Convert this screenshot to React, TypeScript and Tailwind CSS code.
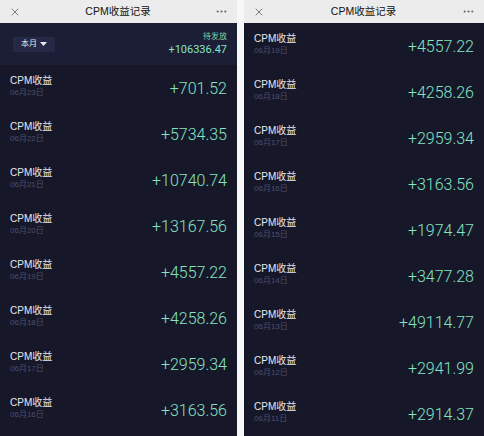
import { X, MoreHorizontal } from 'lucide-react'

type Row = { date: string; amount: string }

const left: Row[] = [
  { date: '06月23日', amount: '+701.52' },
  { date: '06月22日', amount: '+5734.35' },
  { date: '06月21日', amount: '+10740.74' },
  { date: '06月20日', amount: '+13167.56' },
  { date: '06月19日', amount: '+4557.22' },
  { date: '06月18日', amount: '+4258.26' },
  { date: '06月17日', amount: '+2959.34' },
  { date: '06月16日', amount: '+3163.56' },
]

const right: Row[] = [
  { date: '06月19日', amount: '+4557.22' },
  { date: '06月18日', amount: '+4258.26' },
  { date: '06月17日', amount: '+2959.34' },
  { date: '06月16日', amount: '+3163.56' },
  { date: '06月15日', amount: '+1974.47' },
  { date: '06月14日', amount: '+3477.28' },
  { date: '06月13日', amount: '+49114.77' },
  { date: '06月12日', amount: '+2941.99' },
  { date: '06月11日', amount: '+2914.37' },
]

const font = { fontFamily: '"Liberation Sans", "Noto Sans CJK SC", sans-serif' }

function Header() {
  return (
    <div className="h-[23px] shrink-0 bg-[#ececec] flex items-center justify-between px-[9px]">
      <X size={12} strokeWidth={1.5} className="text-[#555]" />
      <span className="text-[10.5px] text-[#111]">CPM收益记录</span>
      <MoreHorizontal size={13} strokeWidth={2} className="text-[#666]" />
    </div>
  )
}

function Item({ row }: { row: Row }) {
  return (
    <div className="h-[46px] shrink-0 flex items-center justify-between pl-[10px] pr-[10px]">
      <div className="flex flex-col -mt-[4px]">
        <span className="text-[10px] leading-[13px] text-[#e8e8ee]">CPM收益</span>
        <span className="text-[8px] leading-[11px] text-[#4b4e6e]">{row.date}</span>
      </div>
      <span className="font-['Roboto',sans-serif] font-light text-[16px] text-[#84e4c4] mt-[1px]">{row.amount}</span>
    </div>
  )
}

export default function App() {
  return (
    <div style={font} className="w-[484px] h-[436px] bg-[#f7f7f7] flex gap-[7px] overflow-hidden">
      <div className="w-[237px] h-full bg-[#161829] flex flex-col overflow-hidden">
        <Header />
        <div className="h-[42px] shrink-0 bg-[#1c1e35] flex items-center justify-between pl-[13px] pr-[10px]">
          <div className="h-[15px] px-[8px] bg-[#252945] flex items-center gap-[3px] text-[8px] text-[#e8e8ee]">
            本月
            <svg width="7" height="4" viewBox="0 0 7 4"><path d="M0 0h7L3.5 4z" fill="#e8e8ee" /></svg>
          </div>
          <div className="flex flex-col items-end">
            <span className="text-[8px] leading-[12px] text-[#6fd3b0]">待发放</span>
            <span className="font-['Roboto',sans-serif] text-[11px] leading-[14px] text-[#84e4c4]">+106336.47</span>
          </div>
        </div>
        {left.map((r, i) => (
          <Item key={i} row={r} />
        ))}
      </div>
      <div className="flex-1 h-full bg-[#161829] flex flex-col overflow-hidden">
        <Header />
        {right.map((r, i) => (
          <Item key={i} row={r} />
        ))}
      </div>
    </div>
  )
}
